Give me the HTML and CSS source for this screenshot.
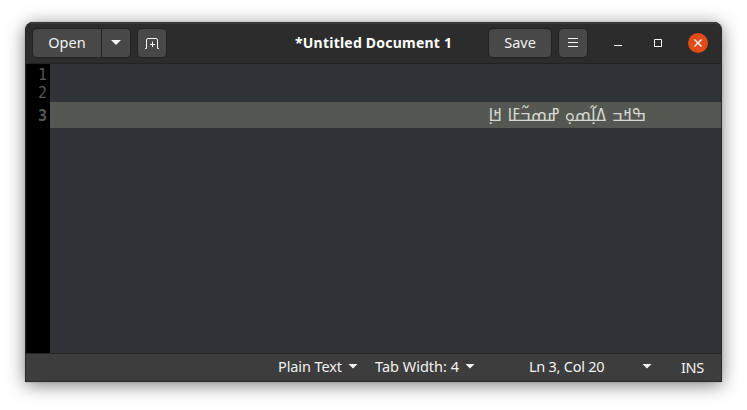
FILE: index.html
```html
<!DOCTYPE html>
<html lang="en">
<head>
<meta charset="utf-8">
<title>Text Editor</title>
<link rel="stylesheet" href="styles.css">
</head>
<body>
<div class="window">
  <header class="headerbar">
    <div class="side">
      <div class="linked">
        <button class="btn open">Open</button>
        <button class="btn drop"><i class="caret"></i></button>
      </div>
      <button class="btn square">
        <svg width="16" height="16" viewBox="0 0 16 16" fill="none" stroke="#f5f5f5"><path d="M1 13.500H2.500V5Q2.500 3.500 4 3.500H12Q13.500 3.500 13.500 5V13.500H15M8.500 6.500V12M6 9.500H11"/></svg>
      </button>
    </div>
    <h1 class="title">*Untitled Document 1</h1>
    <div class="side">
      <button class="btn save">Save</button>
      <button class="btn square">
        <svg width="16" height="16" viewBox="0 0 16 16" stroke="#f5f5f5"><path d="M3 3.500H13M3 7.500H13M3 11.500H13"/></svg>
      </button>
      <div class="controls">
        <svg width="16" height="16" viewBox="0 0 16 16" stroke="#fff"><path d="M4 10.500H12"/></svg>
        <svg width="16" height="16" viewBox="0 0 16 16" fill="none" stroke="#fff"><path d="M4.500 4.500H11.500V11.500H4.500Z"/></svg>
        <svg class="close" width="20" height="20" viewBox="0 0 20 20"><circle cx="10" cy="10" r="10" fill="#e24c18"/><path d="M6.500 6.500L13.500 13.500M13.500 6.500L6.500 13.500" stroke="#fff" stroke-width="1.400"/></svg>
      </div>
    </div>
  </header>
  <main class="editor">
    <div class="line"><span class="num">1</span><span class="code"></span></div>
    <div class="line"><span class="num">2</span><span class="code"></span></div>
    <div class="line current"><span class="num">3</span><span class="code" dir="rtl" lang="nqo">ߒߞߏ ߡߊ߲߬ߘߋ߲ ߝߘߏ߬ߓߊ ߞߊ߲</span></div>
  </main>
  <footer class="statusbar">
    <span class="item lang">Plain Text<i class="caret"></i></span>
    <span class="item tab">Tab Width: 4<i class="caret"></i></span>
    <span class="item pos">Ln 3, Col 20<i class="caret"></i></span>
    <span class="item ins">INS</span>
  </footer>
</div>
</body>
</html>
```
FILE: styles.css
```css
* { box-sizing: border-box; }

body {
  margin: 0;
  padding: 22px 25px 28px;
  background: #fff;
  font: 14.5px/20px "Noto Sans", "Open Sans", sans-serif;
  color: #f2f2f2;
}

.window {
  width: 697px;
  height: 360px;
  display: flex;
  flex-direction: column;
  border: 1px solid #292929;
  border-top: 0;
  border-radius: 8px 8px 0 0;
  overflow: hidden;
  background: #2e3436;
  box-shadow: 0 3px 18px rgba(0, 0, 0, .5), 0 0 2px rgba(0, 0, 0, .2);
}

.headerbar {
  flex: none;
  height: 42px;
  display: flex;
  align-items: center;
  padding: 0 13px 0 7px;
  background: #2c2c2c;
  border-bottom: 1px solid #222;
  box-shadow: inset 0 2px #393939;
}

.side { display: flex; gap: 8px; align-items: center; }
.linked { display: flex; gap: 1px; }

.btn {
  height: 28px;
  padding: 0 0 1px;
  border: 0;
  border-radius: 4px;
  background: #484848;
  box-shadow: 0 0 0 1px #222;
  color: inherit;
  font: inherit;
  display: flex;
  align-items: center;
  justify-content: center;
}

.open { width: 68px; border-radius: 4px 0 0 4px; }
.drop { width: 28px; padding: 0; border-radius: 0 4px 4px 0; }
.square { width: 28px; padding: 0; }
.save { width: 62px; }

.caret {
  width: 10px;
  height: 5px;
  background: #f5f5f5;
  clip-path: polygon(0 0, 100% 0, 50% 100%);
}

.title {
  margin: 0 auto 0 129px;
  font-size: 14px;
  font-weight: 700;
  letter-spacing: .22px;
  color: #fff;
  white-space: nowrap;
}

.controls { display: flex; align-items: center; gap: 24px; margin-left: 15px; }
.close { margin-left: -2px; }

.editor {
  flex: 1;
  background: linear-gradient(90deg, #000 24px, #2e3436 24px);
}

.line { display: flex; height: 18px; }
.line:nth-child(2) { height: 20px; }

.num {
  width: 24px;
  padding-right: 3px;
  text-align: right;
  font: 15px/22px "DejaVu Sans Mono", monospace;
  color: #555753;
}

.current { height: 26px; }
.current .num { font-weight: 700; line-height: 28px; }

.code { flex: 1; }
.current .code {
  padding-right: 75px;
  background: #555753;
  color: #d3d7cf;
  font: 17px/27px "DejaVu Sans", sans-serif;
  white-space: nowrap;
}

.statusbar {
  flex: none;
  height: 28px;
  display: flex;
  align-items: center;
  padding: 0 0 3px 252px;
  background: #3d3d3d;
  border-top: 1px solid #252525;
}

.item { display: flex; align-items: center; justify-content: space-between; white-space: nowrap; }
.lang { width: 80px; letter-spacing: -.1px; }
.tab { width: 100px; margin-left: 17px; }
.pos { width: 123px; margin-left: 54px; letter-spacing: -.25px; }
.ins { margin: 2px 0 0 29px; letter-spacing: -.3px; }
```
